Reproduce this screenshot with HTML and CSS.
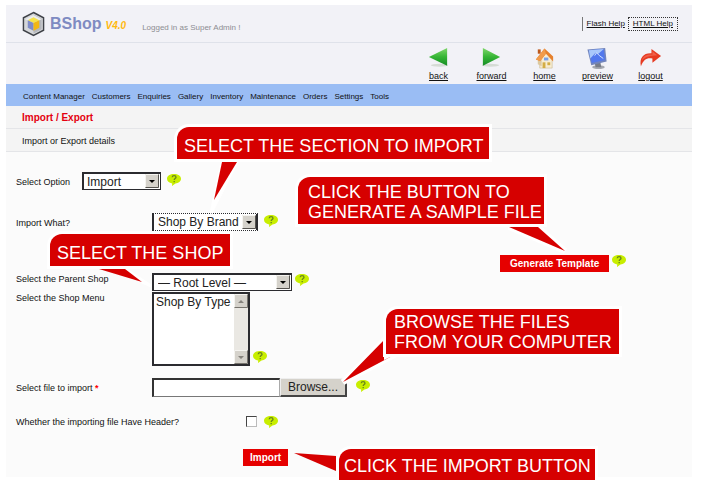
FILE: index.html
```html
<!DOCTYPE html>
<html lang="en">
<head>
<meta charset="utf-8">
<title>BShop - Import / Export</title>
<link rel="stylesheet" href="styles.css">
</head>
<body>
<svg class="defs" aria-hidden="true">
  <symbol id="hint" viewBox="0 0 14 12">
    <path d="M7 0C11 0 14 2 14 4.800C14 7.500 11.500 9.300 8.500 9.500L5 12L5.200 9.400C2 9 0 7.200 0 4.800C0 2 3 0 7 0Z" fill="#c8ee00"/>
    <path d="M5.200 3.200C5.300 1.200 9 1.200 9 3.200C9 4.500 7.200 4.600 7.200 6M7.200 7v1.300" fill="none" stroke="#68851c" stroke-width="1.300"/>
  </symbol>
  <symbol id="down" viewBox="0 0 14 14">
    <rect width="14" height="14" fill="#d5d2cb"/>
    <path d="M.5 13.500V.5H13.500" fill="none" stroke="#f5f4f0"/>
    <path d="M.5 13.500H13.500V.5" fill="none" stroke="#55534f"/>
    <path d="M4 6H10L7 9Z" fill="#000"/>
  </symbol>
</svg>
<div class="panel">
  <header class="brandbar">
    <svg class="logo" viewBox="0 0 24 26" aria-hidden="true">
      <path d="M12 1L22.500 6.500V19.500L12 25L1.500 19.500V6.500Z" fill="#d5d7da" stroke="#3f4248" stroke-width="1.500"/>
      <path d="M12 3L20.500 7.500V18.500L12 23Z" fill="#b5b7bc"/>
      <path d="M3.500 8L12 3.500L20.500 8L12 12Z" fill="#eceded"/>
      <path d="M12 6L18 9L12 12L6 9Z" fill="#f6e34b"/>
      <path d="M6 9L12 12V20L6 17Z" fill="#7f8cc9"/>
      <path d="M12 12L18 9V17L12 20Z" fill="#f3b713"/>
    </svg>
    <span class="name">BShop</span>
    <span class="version">V4.0</span>
    <span class="user">Logged in as Super Admin !</span>
    <div class="help"><a href="#">Flash Help</a><a class="focused" href="#">HTML Help</a></div>
  </header>
  <div class="toolbar">
    <a href="#"><svg viewBox="0 0 24 24"><defs><linearGradient id="g" x1="0" y1="0" x2="0" y2="1"><stop offset="0" stop-color="#7fd76a"/><stop offset=".5" stop-color="#36b535"/><stop offset="1" stop-color="#158c25"/></linearGradient></defs><ellipse cx="13" cy="19" rx="9" ry="1.500" fill="#d5dbd5"/><path d="M2 10.500L21 1V19.500Z" fill="url(#g)"/></svg>back</a>
    <a href="#"><svg viewBox="0 0 24 24"><ellipse cx="11" cy="19" rx="9" ry="1.500" fill="#d5dbd5"/><path d="M21 10.500L3 1V19.500Z" fill="url(#g)"/></svg>forward</a>
    <a href="#"><svg viewBox="0 0 24 24"><path d="M7 10L14 5L20 12V22H7Z" fill="#f7ecd2" stroke="#c9b78b" stroke-width=".6"/><path d="M5 12L9 8V20L5 18Z" fill="#dcc9a0"/><path d="M5 2.500H8V7H5Z" fill="#bd581c"/><path d="M3 13L12 1.500L21 10V15L13.500 7L7.500 14.500Z" fill="#e6812d"/><path d="M3 13L12 1.500L13.500 7L7.500 14.500Z" fill="#f19b4c"/><path d="M11.500 11H16V14H11.500Z" fill="#7aa0e8"/><path d="M10 16H13V22H10Z" fill="#d3ad45"/><path d="M15 16H18V19H15Z" fill="#d3ad45"/></svg>home</a>
    <a href="#"><svg viewBox="0 0 24 24"><ellipse cx="13" cy="21" rx="6.500" ry="2" fill="#a5a8b0"/><path d="M9 16L15 16L16 21H10Z" fill="#777c88"/><path d="M1.500 2.500L20 1L21.500 15L5.500 19Z" fill="#7184bc"/><path d="M3 3.500L18.500 2.200L19.800 13.500L6 16.800Z" fill="#5278ed"/><path d="M3 3.500L18.500 2.200L13 7L10 6L4.500 12Z" fill="#a9c8fb"/><path d="M9 9L11 6L14 9L18 12" fill="none" stroke="#d7e7ff"/></svg>preview</a>
    <a href="#"><svg viewBox="0 0 24 24"><path d="M2 20C0 11 5 6 13 6.500V2L23 9.500L14 16.500V12C8 11 5 13 2 20Z" fill="#e63a22"/><path d="M3 14C5 8.500 9 7.500 14 8V4.500L19 8.500C12 9 7 9.500 3 14Z" fill="#f0604a"/></svg>logout</a>
  </div>
  <nav class="menu">
    <a href="#">Content Manager</a><a href="#">Customers</a><a href="#">Enquiries</a><a href="#">Gallery</a><a href="#">Inventory</a><a href="#">Maintenance</a><a href="#">Orders</a><a href="#">Settings</a><a href="#">Tools</a>
  </nav>
  <h1>Import / Export</h1>
  <h2>Import or Export details</h2>
  <form>
    <div class="row option">
      <label for="option">Select Option</label>
      <div class="pick pick-option"><select id="option"><option>Import</option></select><svg><use href="#down"/></svg></div>
      <svg class="hint"><use href="#hint"/></svg>
    </div>
    <div class="row what">
      <label for="what">Import What?</label>
      <div class="pick pick-what"><select id="what"><option>Shop By Brand</option></select><svg><use href="#down"/></svg></div>
      <svg class="hint"><use href="#hint"/></svg>
      <div class="callout section"><svg class="tail" viewBox="0 0 40 56"><path d="M13 0H28L2 51Z" fill="#fff" stroke="#fff" stroke-width="3"/><path d="M13 0H28L5 38Z" fill="#d60000"/></svg><p>SELECT THE SECTION TO IMPORT</p></div>
    </div>
    <div class="row template">
      <button type="button" class="action">Generate Template</button>
      <svg class="hint"><use href="#hint"/></svg>
      <div class="callout sample"><svg class="tail" viewBox="0 0 62 30"><path d="M2 0H31L58 24Z" fill="#d60000" stroke="#fff" stroke-width="6" paint-order="stroke"/></svg><p>CLICK THE BUTTON TO<br>GENERATE A SAMPLE FILE</p></div>
    </div>
    <div class="row parent">
      <label for="parent">Select the Parent Shop</label>
      <div class="pick pick-parent"><select id="parent"><option>— Root Level —</option></select><svg><use href="#down"/></svg></div>
      <svg class="hint"><use href="#hint"/></svg>
      <div class="callout shop"><svg class="tail" viewBox="0 0 60 20"><path d="M28 0L54 17L45 13Z" fill="#fff" stroke="#fff" stroke-width="3"/><path d="M2 0H28L45 13Z" fill="#d60000"/></svg><p>SELECT THE SHOP</p></div>
    </div>
    <div class="row shopmenu">
      <label for="shopmenu">Select the Shop Menu</label>
      <div class="list"><select id="shopmenu" size="4"><option>Shop By Type</option></select>
        <svg viewBox="0 0 14 70"><path d="M0 0H14V70H0Z" fill="#eae8e3"/><path d="M0 0H14V14H0ZM0 56H14V70H0Z" fill="#d5d2cb"/><path d="M.5 13.500V.5H13.500M.5 69.500V56.500H13.500" fill="none" stroke="#f5f4f0"/><path d="M.5 13.500H13.500V.5M.5 69.500H13.500V56.500" fill="none" stroke="#77746e"/><path d="M4 9H10L7 6ZM4 62H10L7 65Z" fill="#85827c"/></svg>
      </div>
      <svg class="hint"><use href="#hint"/></svg>
    </div>
    <div class="row file">
      <label for="file">Select file to import <b>*</b></label>
      <div class="upload"><input type="text" id="file"><button type="button">Browse...</button></div>
      <svg class="hint"><use href="#hint"/></svg>
      <div class="callout browse"><svg class="tail" viewBox="0 0 64 52"><path d="M5 46L46 4V24L58 18Z" fill="#d60000" stroke="#fff" stroke-width="6" paint-order="stroke"/></svg><p>BROWSE THE FILES<br>FROM YOUR COMPUTER</p></div>
    </div>
    <div class="row header">
      <label for="header">Whether the importing file Have Header?</label>
      <input type="checkbox" id="header">
      <svg class="hint"><use href="#hint"/></svg>
    </div>
    <div class="row submit">
      <button type="button" class="action">Import</button>
      <div class="callout run"><svg class="tail" viewBox="0 0 50 30"><path d="M3 4L45 7V22Z" fill="#d60000"/></svg><p>CLICK THE IMPORT BUTTON</p></div>
    </div>
  </form>
</div>
</body>
</html>
```
FILE: styles.css
```css
* { box-sizing: border-box; }
body {
  margin: 0;
  padding: 5px 10px 10px 6px;
  background: #fff;
  color: #111;
  font: 9px/12px "Liberation Sans", Arial, sans-serif;
}
a { color: inherit; }
svg { display: block; }
.defs { position: absolute; width: 0; height: 0; }
.panel { background: #fbfbfb; min-width: 640px; }

.brandbar {
  display: flex;
  align-items: center;
  height: 38px;
  padding: 0 14px 0 16px;
  background: #f2f2f7;
  border-bottom: 1px solid #dfe2ea;
}
.logo { width: 23px; height: 26px; margin-right: 5px; }
.name { font-size: 16px; font-weight: bold; color: #7f8bc2; }
.version { margin: 5px 0 0 4px; font-size: 10px; font-weight: bold; font-style: italic; color: #ffb911; }
.user { margin: 8px 0 0 16px; font-size: 8px; color: #8d8d92; }
.help {
  display: flex;
  align-items: center;
  margin-left: auto;
  padding-left: 4px;
  border-left: 1px solid #777;
  font-size: 8px;
}
.help a { white-space: nowrap; }
.help .focused { margin-left: 3px; padding: 0 4px; border: 1px dotted #333; }

.toolbar {
  display: flex;
  justify-content: flex-end;
  height: 41px;
  padding: 4px 15px 0 0;
  background: #f2f2f7;
}
.toolbar a { display: flex; flex-direction: column; align-items: center; width: 53px; }
.toolbar svg { width: 23px; height: 23px; }

.menu {
  display: flex;
  align-items: center;
  gap: 7px;
  height: 22px;
  padding: 4px 17px 0;
  background: #9abdf4;
  font-size: 8px;
}
.menu a { text-decoration: none; white-space: nowrap; }
h1, h2 {
  margin: 0;
  height: 23px;
  padding: 6px 16px 0;
  background: #f4f4f4;
  border-bottom: 1px solid #e4e5e8;
  font-size: 9px;
  font-weight: normal;
}
h1 { font-size: 10px; font-weight: bold; color: #e4000f; }

form { padding: 20px 0 11px 10px; }
.row { position: relative; display: flex; align-items: flex-start; }
.row > label { flex: none; width: 136px; padding-top: 4px; white-space: nowrap; }
.row b { color: #f00; }
.hint { flex: none; width: 14px; height: 12px; margin: 2px 0 0 6px; }
.option > label { width: 66px; }
.what { margin-top: 23px; }
.template { margin-top: 24px; padding-left: 484px; }
.template .action { padding: 0 10px; }
.template .hint { margin: 0 0 0 3px; }
.parent { margin-top: 1px; }
.parent > label { padding-top: 0; }
.parent .hint { margin: 1px 0 0 3px; }
.shopmenu { margin-top: 1px; }
.shopmenu > label { padding-top: 0; }
.shopmenu .hint { align-self: flex-end; margin: 0 0 3px 3px; }
.file { margin-top: 12px; }
.file .hint { margin-left: 9px; }
.header { margin-top: 19px; }
.header > label { width: 230px; padding: 0; }
.header .hint { margin: 0 0 0 7px; }
.submit { margin-top: 21px; padding-left: 227px; }

select, input, button { margin: 0; border-radius: 0; font: 12px/14px "Liberation Sans", Arial, sans-serif; color: #222; }
.pick { position: relative; height: 18px; }
.pick select {
  appearance: none;
  width: 100%;
  height: 18px;
  padding: 0 17px 0 3px;
  border: 2px solid #2b2b2f;
  border-right-width: 1px;
  border-bottom-width: 1px;
  background: #fff;
}
.pick svg { position: absolute; top: 2px; right: 2px; width: 14px; height: 14px; pointer-events: none; }
.pick-option { width: 79px; }
.pick-what { width: 106px; }
.pick-what select { border-width: 1px 2px 1px 2px; border-style: dotted solid; padding-left: 4px; }
.pick-parent { width: 140px; }
.pick-parent select { padding-left: 4px; }
.list { position: relative; }
.list select {
  display: block;
  appearance: none;
  width: 98px;
  height: 74px;
  padding: 0;
  border: 2px solid #2b2b2f;
  background: #fff;
  overflow: hidden;
}
.list option { padding: 1px 2px; min-height: 0; }
.list svg { position: absolute; top: 2px; right: 2px; width: 14px; height: 70px; pointer-events: none; }
.upload { display: flex; height: 19px; }
.upload input {
  width: 128px;
  border: 2px solid #333;
  border-right: 1px solid #aaa;
  border-bottom: 1px solid #777;
  background: #fff;
}
.upload button {
  width: 67px;
  padding: 0;
  border: 1px solid #eee;
  border-right: 2px solid #444;
  border-bottom: 2px solid #444;
  background: #d5d2cb;
}
input[type="checkbox"] {
  appearance: none;
  width: 11px;
  height: 11px;
  border: 1px solid #bbb;
  border-top-color: #444;
  border-left-color: #444;
  background: #fff;
}
.action {
  height: 17px;
  padding: 0 7px;
  border: 0;
  background: #e60000;
  color: #fff;
  font-size: 10px;
  font-weight: bold;
  white-space: nowrap;
}

.callout { position: absolute; z-index: 1; pointer-events: none; }
.callout p {
  position: relative;
  margin: 0;
  border-radius: 12px 0 0 0;
  box-shadow: 0 0 0 3px #fff;
  background: #d60000;
  color: #fff;
  font-size: 18px;
  line-height: 20px;
  white-space: nowrap;
}
.tail { position: absolute; overflow: visible; }
.section { left: 161px; top: -86px; }
.section p { padding: 9px 6px 3px 7px; }
.section .tail { left: 32px; top: 35px; width: 40px; height: 56px; }
.sample { left: 282px; top: -78px; }
.sample p { padding: 5px 2px 2px 10px; }
.sample .tail { left: 209px; top: 50px; width: 62px; height: 30px; }
.shop { left: 34px; top: -39px; }
.shop p { padding: 9px 7px 3px 7px; }
.shop .tail { left: 47px; top: 35px; width: 60px; height: 20px; }
.browse { left: 370px; top: -69px; }
.browse p { padding: 3px 7px 2px 8px; }
.browse .tail { left: -48px; top: 27px; width: 64px; height: 52px; }
.run { left: 323px; top: 0; }
.run p { padding: 7px 4px 4px 5px; }
.run .tail { left: -48px; top: 0; width: 50px; height: 30px; }
```
